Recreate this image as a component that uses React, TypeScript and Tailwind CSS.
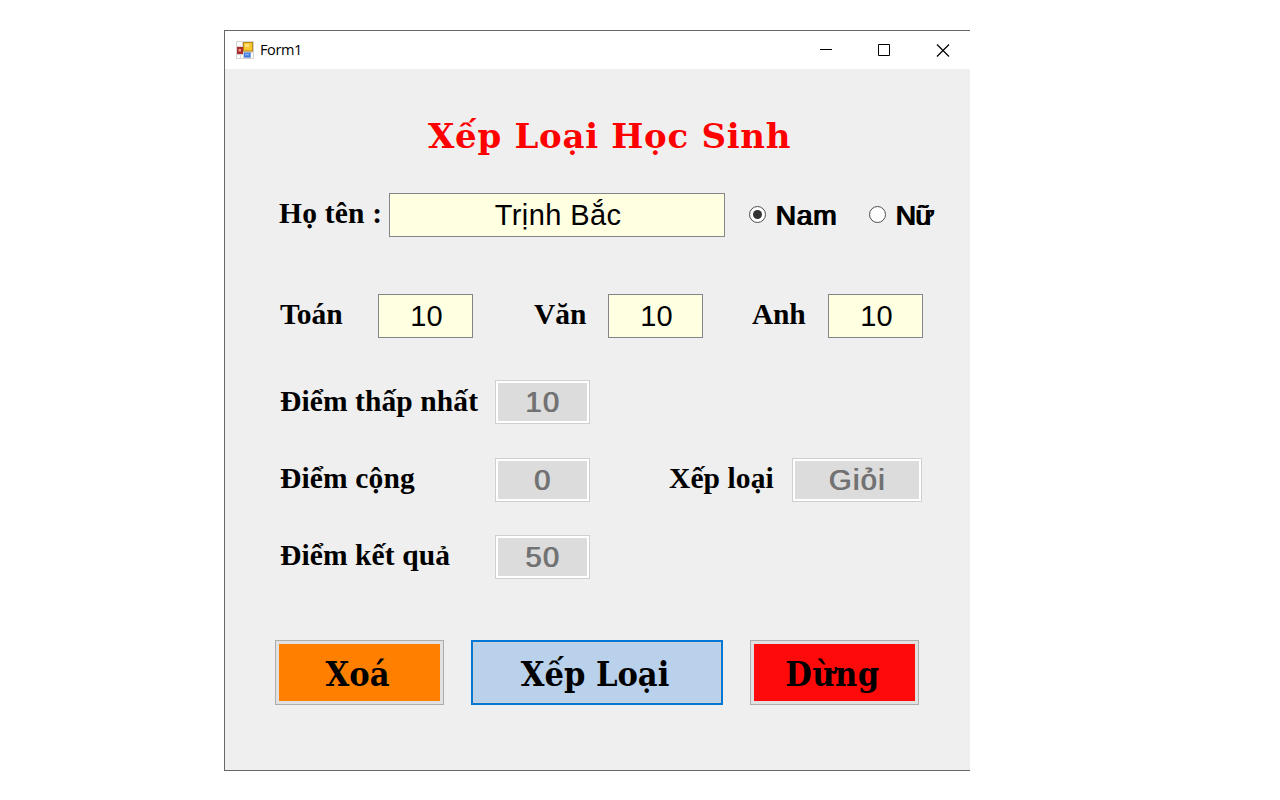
import type { ReactNode } from "react";

const serif = "font-['Liberation_Serif',serif] font-bold text-[29.5px] leading-[40px] whitespace-nowrap";
const sans = "font-['Liberation_Sans',sans-serif]";
const slab = "font-bold whitespace-nowrap";

function Label({ children, className }: { children: ReactNode; className: string }) {
  return (
    <div className={`shrink-0 ${serif} ${className}`}>
      <span>{children}</span>
    </div>
  );
}

function Field({ children, className }: { children: ReactNode; className: string }) {
  return (
    <div className={`flex h-11 shrink-0 items-center justify-center border border-[#858589] bg-[#ffffe1] pl-[2px] text-[29px] leading-[42px] whitespace-nowrap text-black ${sans} ${className}`}>
      <span>{children}</span>
    </div>
  );
}

function Result({ children, className }: { children: ReactNode; className: string }) {
  return (
    <div className={`h-11 shrink-0 border border-[#cfcfcf] bg-white p-0.5 ${className}`}>
      <div className={`flex h-full items-center justify-center bg-[#dcdcdc] text-[29px] leading-[38px] tracking-[1.3px] whitespace-nowrap text-[#727272] [text-shadow:1px_0_0_#727272] ${sans}`}>
        <span>{children}</span>
      </div>
    </div>
  );
}

function Radio({ children, checked, className }: { children: ReactNode; checked?: boolean; className: string }) {
  return (
    <div role="radio" aria-checked={!!checked} className={`flex h-11 shrink-0 items-center ${className}`}>
      <span className="mb-px flex size-[17px] items-center justify-center rounded-full border border-[#4d4d4d] bg-white">
        {checked && <span className="size-[9px] rounded-full bg-[#333]" />}
      </span>
      <span className={`ml-[9px] pt-px text-[28px] whitespace-nowrap [text-shadow:1px_0_0_#000,1.5px_0_0_#000] ${sans}`}>{children}</span>
    </div>
  );
}

function Action({ children, frame, face, className }: { children: ReactNode; frame: string; face: string; className: string }) {
  return (
    <button className={`h-[65px] shrink-0 ${frame} ${className}`}>
      <span className={`flex h-full items-center justify-center pt-[3px] pr-[4px] font-['DejaVu_Serif_Condensed','DejaVu_Serif',serif] text-[34px] leading-none ${slab} ${face}`}>
        <span>{children}</span>
      </span>
    </button>
  );
}

export default function App() {
  return (
    <div className="h-[800px] w-[1280px] overflow-hidden bg-white pt-[30px] pl-[224px] text-black">
      <div className="flex h-[741px] w-[746px] flex-col border-y border-l border-[#68666b] bg-[#efefef]">
        <header className="flex h-[38px] shrink-0 items-center bg-white pb-px pl-[11px]">
          <svg width="18" height="18" viewBox="0 0 18 18">
            <rect width="18" height="18" fill="#d5d5d7" />
            <path d="M1 1h5v4H1zM1 14h3v3H1zM5 14h2v3H5zM15 12h2v5h-2z" fill="#fff" />
            <rect x="1" y="6" width="6" height="7" fill="#a92b2a" />
            <rect x="2.5" y="8" width="2.5" height="2.5" fill="#f09a90" />
            <rect x="7" y="1" width="10" height="9.5" fill="#b98a12" />
            <rect x="8" y="2" width="8" height="7.5" fill="#f8c62e" />
            <rect x="9" y="3" width="4" height="3" fill="#fde07a" />
            <rect x="8" y="11.5" width="6.5" height="5" fill="#3b78df" />
            <rect x="9" y="12.5" width="4" height="2" fill="#79aaf8" />
          </svg>
          <span className="ml-[6px] font-['Open_Sans',sans-serif] text-[14.5px] tracking-[-0.4px]">Form1</span>
          <svg className="mt-[2px] mr-[20px] ml-auto" width="130" height="13" viewBox="0 0 130 13" fill="none" stroke="#000">
            <path d="M0 5.5h12M58.5.5h11v11h-11z" />
            <path d="M117 .5l12 12M129 .5l-12 12" strokeWidth="1.2" />
          </svg>
        </header>

        <h1 className={`mt-[45px] ml-[203px] h-11 w-[370px] font-['DejaVu_Serif',serif] text-[34px] leading-[44px] tracking-[0.7px] text-[#ff0000] ${slab}`}>
          <span>Xếp Loại Học Sinh</span>
        </h1>

        <div className="mt-[35px] flex h-11 pl-[54px]">
          <Label className="w-[110px] tracking-[0.2px]">Họ tên :</Label>
          <Field className="w-[336px] tracking-[0.4px]">Trịnh Bắc</Field>
          <Radio checked className="ml-[24px] w-[120px] tracking-[0.8px]">Nam</Radio>
          <Radio className="w-[70px] tracking-[-0.5px]">Nữ</Radio>
        </div>

        <div className="mt-[57px] flex h-11 pl-[55px]">
          <Label className="w-[98px] tracking-[-0.1px]">Toán</Label>
          <Field className="w-[95px]">10</Field>
          <Label className="ml-[61px] w-[74px]">Văn</Label>
          <Field className="w-[95px]">10</Field>
          <Label className="ml-[49px] w-[76px] tracking-[-0.2px]">Anh</Label>
          <Field className="w-[95px]">10</Field>
        </div>

        <div className="mt-[42px] flex h-11 pl-[55px]">
          <Label className="w-[215px] pt-px tracking-[0.1px]">Điểm thấp nhất</Label>
          <Result className="w-[95px]">10</Result>
        </div>

        <div className="mt-[34px] flex h-11 pl-[55px]">
          <Label className="w-[215px] tracking-[0.15px]">Điểm cộng</Label>
          <Result className="w-[95px]">0</Result>
          <Label className="ml-[79px] w-[123px] tracking-[0.1px]">Xếp loại</Label>
          <Result className="w-[130px]">Giỏi</Result>
        </div>

        <div className="mt-[33px] flex h-11 pl-[55px]">
          <Label className="w-[215px] tracking-[0.1px]">Điểm kết quả</Label>
          <Result className="w-[95px]">50</Result>
        </div>

        <div className="mt-[61px] flex h-[65px] pl-[50px]">
          <Action className="w-[169px]" frame="border border-[#adadad] bg-[#e1e1e1] p-[3px]" face="bg-[#ff8000]">Xoá</Action>
          <Action className="ml-[27px] w-[252px]" frame="border-2 border-[#0078d7] bg-[#d0d0d0] p-px" face="bg-[#b9d1ea]">Xếp Loại</Action>
          <Action className="ml-[27px] w-[169px]" frame="border border-[#adadad] bg-[#e1e1e1] p-[3px]" face="bg-[#ff0a0a] tracking-[0.5px]">Dừng</Action>
        </div>
      </div>
    </div>
  );
}
